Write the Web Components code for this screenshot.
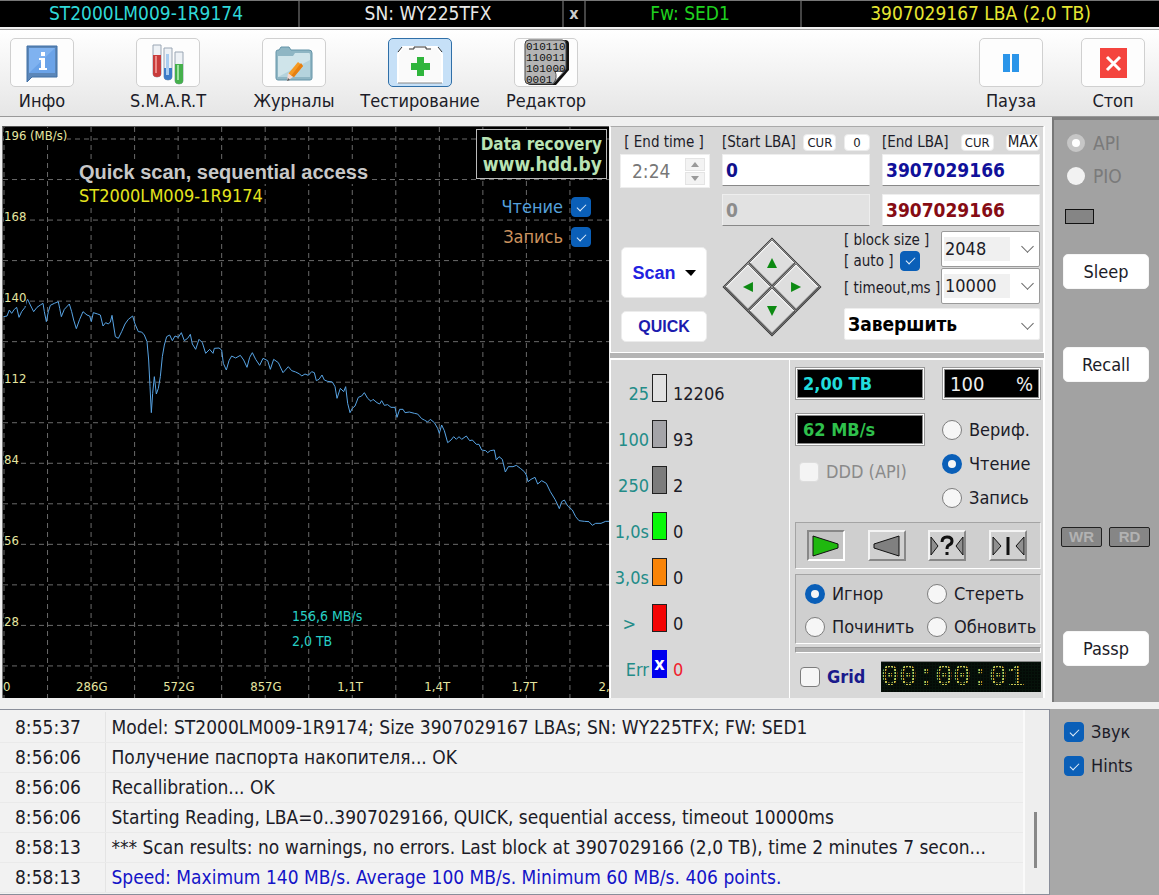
<!DOCTYPE html>
<html lang="ru">
<head>
<meta charset="utf-8">
<title>HDD test console</title>
<style>
  html { height: 100%; }
  body {
    margin: 0; min-height: 100%; background: #f0f0f0; color: #1c1c28;
    font: 18px/22px "DejaVu Sans Condensed", "Noto Sans", sans-serif;
  }
</style>
</head>
<body>
<hdd-app></hdd-app>
<script>
const BASE = `
  *, *::before, *::after { box-sizing: border-box; }
  button, input, select { font: inherit; color: inherit; margin: 0; }
  button { padding: 0; border: 1px solid #ececec; border-radius: 5px; background: #fff; }
  input[type=checkbox], input[type=radio] {
    appearance: none; flex: none; width: 20px; height: 20px; margin: 0;
    border: 1px solid #7d7d7d; background: #f6f6f6; display: grid; place-items: center;
  }
  input[type=checkbox] { border-radius: 4px; }
  input[type=radio] { border-radius: 50%; }
  input[type=checkbox]:checked { background: #0a5fb8; border-color: #0a5fb8; }
  input[type=checkbox]:checked::before {
    content: ""; width: 9px; height: 5px; border: solid #e4f0fb; border-width: 0 0 1px 1px;
    transform: translateY(-1px) rotate(-45deg);
  }
  input[type=radio]:checked { background: #f6f6f6; border: 6px solid #0a5fb8; }
  label { white-space: nowrap; }
`;

function define(name, html, setup) {
  const tpl = document.createElement('template');
  tpl.innerHTML = `<style>${BASE}</style>${html}`;
  customElements.define(name, class extends HTMLElement {
    connectedCallback() {
      if (this.shadowRoot) return;
      this.attachShadow({ mode: 'open' }).append(tpl.content.cloneNode(true));
      if (setup) setup(this, this.shadowRoot);
    }
  });
}

/* ---------- title bar ---------- */
define('title-bar', `
  <style>
    :host { display: grid; grid-template-columns: 300fr 264fr 22px 216fr 357fr; height: 27px;
      background: #000; border-top: 1px solid #777; font-size: 19px; line-height: 25px; text-align: center; }
    span { border-right: 2px solid #444; padding-right: 6px; white-space: nowrap; overflow: hidden; }
    span:last-of-type { border: 0; padding: 0; }
    button { background: none; border: 0; border-right: 2px solid #444; border-radius: 0; color: #ccc; font-weight: bold; font-size: 16px; line-height: 24px; }
  </style>
  <span style="color:#2fd8d8">ST2000LM009-1R9174</span>
  <span style="color:#e8e8e8">SN: WY225TFX</span>
  <button type="button">x</button>
  <span style="color:#1fd01f">Fw: SED1</span>
  <span style="color:#e6e632">3907029167 LBA (2,0 TB)</span>
`);

/* ---------- toolbar ---------- */
define('tool-button', `
  <style>
    :host { display: block; width: 64px; }
    button { width: 100%; background: none; border: 0; display: flex; flex-direction: column; align-items: center; gap: 3px; white-space: nowrap; }
    .box { width: 64px; height: 49px; border: 1px solid #d0d0d0; border-radius: 5px; background: #fdfdfd; display: grid; place-items: center; overflow: hidden; }
    :host([active]) .box { background: #c6e0f7; border-color: #2f6fa8; }
    ::slotted(svg) { display: block; }
  </style>
  <button type="button"><span class="box"><slot name="icon"></slot></span><span><slot></slot></span></button>
`);

define('tool-bar', `
  <style>
    :host { display: flex; justify-content: space-between; height: 88px; padding: 8px 14px 0 10px; margin-top: 2px;
      border-top: 1px solid #a0a0a0; border-bottom: 1px solid #999; background: linear-gradient(#fff, #e6e6e6); }
    div { display: flex; gap: 62px; }
    div + div { gap: 38px; }
  </style>
  <div>
    <tool-button>
      <svg slot="icon" width="36" height="42" viewBox="0 0 36 42"><path d="M3 4H33V35H8L3 40Z" fill="#5b86b8" stroke="#3f6ea4"/><path d="M5 6H31V31H5Z" fill="#7fb2f0"/><path d="M5 31L31 6V31Z" fill="#6ba3e8"/><path d="M17 10h4v4h-4zM15 16h6v10h2v2h-8v-2h2v-8h-2z" fill="#fff"/></svg>
      Инфо
    </tool-button>
    <tool-button>
      <svg slot="icon" width="36" height="44" viewBox="0 0 36 44">
        <g stroke-width="1" fill="#eef2f6" stroke="#9aa6b4">
          <path d="M3 4h8v29q0 3-4 3t-4-3z"/><path d="M14 7h8v29q0 3-4 3t-4-3z"/><path d="M25 11h8v29q0 3-4 3t-4-3z"/></g>
        <path d="M3 14h8v19q0 3-4 3t-4-3z" fill="#c83c3c"/><path d="M5 15h2v17h-2z" fill="#ec8a86"/>
        <path d="M14 27h8v9q0 3-4 3t-4-3z" fill="#3c7cc8"/><path d="M16 13h3v21h-3z" fill="#a9cdf0"/>
        <path d="M25 23h8v17q0 3-4 3t-4-3z" fill="#45b04c"/><path d="M27 24h2v15h-2z" fill="#9ce29e"/>
      </svg>
      S.M.A.R.T
    </tool-button>
    <tool-button>
      <svg slot="icon" width="40" height="42" viewBox="0 0 40 42">
        <path d="M2 10q0-2 2-2h1l2-3h8l2 3h18q3 0 3 3v25q0 2-2 2H4q-2 0-2-2z" fill="#8fb6c4" stroke="#6494a8"/>
        <path d="M4 14h15l2-3h14q1 0 1 2v22H4z" fill="#cfe4ea"/><path d="M4 35L36 18V35Z" fill="#b4d3dd"/>
        <path d="M24 20l5 4-9 11-6-3z" fill="#f59a23"/><path d="M27 21l2 3-9 11-3-1z" fill="#e67f10"/><path d="M14 31l5 4-6 4z" fill="#f3d9d3"/><path d="M13 39l1-3 2 2z" fill="#555"/>
      </svg>
      Журналы
    </tool-button>
    <tool-button active>
      <svg slot="icon" width="48" height="44" viewBox="0 0 48 44">
        <path d="M2 41V13L7 6H41L46 13V41Z" fill="#fafafa" stroke="#fff" stroke-width="2"/>
        <path d="M2 42H46" stroke="#888"/><path d="M2 11l4-5M46 11l-4-5M13 8h5V6h12v2h5" fill="none" stroke="#333" stroke-width="1"/>
        <path d="M21 16h7v6h6v7h-6v6h-7v-6h-6v-7h6z" fill="#2fb53c"/>
      </svg>
      Тестирование
    </tool-button>
    <tool-button>
      <svg slot="icon" width="46" height="47" viewBox="0 0 46 47">
        <path d="M4 5q0-4 4-4h34q4 0 4 4v26L33 46H8q-4 0-4-4z" fill="#111"/>
        <path d="M2 5q0-4 4-4h33q4 0 4 4v25L30 45H6q-4 0-4-4z" fill="#b4b4b4" stroke="#444"/>
        <path d="M30 45q5-6 2-13q6 2 11-2z" fill="#fff" stroke="#555"/>
        <g font-family="Liberation Mono, monospace" font-size="11" fill="#111"><text x="3" y="11">010110</text><text x="3" y="22">110011</text><text x="3" y="33">101000</text><text x="3" y="44">0001</text></g>
      </svg>
      Редактор
    </tool-button>
  </div>
  <div>
    <tool-button><svg slot="icon" width="16" height="18" viewBox="0 0 16 18"><path d="M0 0h7v18H0zM9 0h7v18H9z" fill="#2b95e9"/></svg>Пауза</tool-button>
    <tool-button><svg slot="icon" width="27" height="30" viewBox="0 0 27 30"><path d="M0 0h27v30H0z" fill="#f4443e"/><path d="M7 9l13 13M20 9L7 22" stroke="#fff" stroke-width="3"/></svg>Стоп</tool-button>
  </div>
`);

/* ---------- speed chart ---------- */
const SPEED = `8,590 18,588 25,570 32,580 40,568 47,562 54,592 62,575 72,562 76,545 80,538 88,555 98,575 108,562 118,555 126,550 130,575 136,605 142,575 148,556 160,550 172,545 176,565 181,590 190,568 205,552 212,575 218,600 226,626 236,598 246,575 258,585 266,588 271,605 277,578 290,582 298,585 306,618 314,608 322,612 328,606 333,586 338,618 343,650 352,655 362,635 372,612 382,598 395,588 402,612 412,635 422,636 430,645 438,665 443,720 447,800 451,878 455,820 460,770 466,822 472,805 478,770 484,710 490,675 497,650 506,645 514,662 522,648 532,652 541,638 550,662 560,655 568,643 574,672 584,688 594,658 604,668 614,700 626,688 636,700 640,685 654,684 662,690 667,730 676,750 684,722 692,708 704,714 718,706 728,720 738,742 746,712 754,698 764,718 776,736 786,715 800,722 808,748 818,718 832,728 846,758 862,740 872,752 884,756 896,762 902,768 912,762 922,766 932,755 940,758 946,782 954,778 963,765 970,780 980,784 994,786 1002,800 1008,835 1018,805 1028,815 1034,800 1040,850 1047,878 1054,865 1062,858 1072,832 1082,828 1090,818 1100,835 1110,844 1116,838 1128,848 1136,852 1142,842 1150,856 1160,854 1170,862 1182,862 1188,892 1196,868 1206,868 1212,878 1225,876 1240,880 1250,882 1262,896 1270,900 1280,906 1288,898 1300,908 1310,925 1315,940 1322,915 1330,932 1340,968 1350,960 1358,950 1366,958 1374,950 1382,958 1396,948 1406,962 1414,960 1426,973 1434,973 1442,990 1454,992 1460,998 1468,992 1480,990 1486,1020 1494,1010 1504,1018 1513,1056 1522,1040 1536,1040 1546,1036 1558,1045 1570,1055 1576,1065 1581,1085 1590,1078 1602,1072 1610,1092 1622,1082 1636,1090 1648,1115 1662,1138 1668,1150 1675,1166 1682,1145 1690,1140 1700,1158 1714,1170 1724,1190 1734,1202 1750,1204 1764,1205 1774,1216 1784,1210 1800,1210 1814,1204 1826,1204`;
const PLOT = { x: 6, y: 21, w: 1818, h: 1713, x0: 9, dx: 130.6, y0: 57, dy: 121.6 };

define('speed-chart', `
  <style>
    :host { display: block; position: relative; overflow: hidden; background: #000; border-top: 1px solid #555; border-left: 1px solid #777; font-size: 13px; line-height: 16px; color: #e6e6a0; }
    svg { display: block; width: 100%; height: 100%; position: absolute; inset: 0; }
    svg * { vector-effect: non-scaling-stroke; fill: none; }
    .axis { position: absolute; background: #000; white-space: nowrap; }
    .y { left: 1px; transform: translateY(-11px); }
    .x { bottom: 3px; transform: translateX(-15px); }
    .title, .brand, .legend, .cursor { position: absolute; }
    .title { left: 76px; top: 33px; }
    .title * { display: block; width: max-content; background: #000; margin: 0; white-space: nowrap; }
    h2 { font: bold 20px/24px "Liberation Sans", sans-serif; color: #c8c8c8; }
    p { font-size: 18px; line-height: 24px; color: #e4e41e; }
    .brand { right: 2px; top: 2px; padding: 4px 4px; border: 1px solid #bbb; background: #000; color: #b9e3b4; font-weight: bold; font-size: 17px; line-height: 20px; text-align: right; text-decoration: none; }
    .brand span { display: block; }
    .brand span + span { font-size: 19px; }
    .legend { right: 18px; top: 69px; display: flex; flex-direction: column; gap: 8px; align-items: flex-end; font-size: 18px; line-height: 22px; }
    .legend label { display: flex; align-items: center; gap: 8px; }
    .cursor { left: 48%; top: 477px; margin-left: -2px; color: #27cfc6; font-size: 14px; line-height: 25px; }
    .cursor span { display: block; }
  </style>
  <svg viewBox="${PLOT.x} ${PLOT.y} ${PLOT.w} ${PLOT.h}" preserveAspectRatio="none"><g stroke="#6a6a6a" stroke-dasharray="5 4"></g><polyline stroke="#58a4e4" points="${SPEED}"/></svg>
  <div class="title"><h2>Quick scan, sequential access</h2><p>ST2000LM009-1R9174</p></div>
  <a class="brand" href="#"><span>Data recovery</span><span>www.hdd.by</span></a>
  <div class="legend">
    <label style="color:#55a0dc">Чтение <input type="checkbox" checked></label>
    <label style="color:#cc935e">Запись <input type="checkbox" checked></label>
  </div>
  <div class="cursor"><span>156,6 MB/s</span><span>2,0 TB</span></div>
`, (host, root) => {
  const g = root.querySelector('g');
  let lines = '';
  for (let i = 0; i < 14; i++) {
    const x = PLOT.x0 + PLOT.dx * i, y = PLOT.y0 + PLOT.dy * i;
    lines += `<path d="M${x} ${PLOT.y}V${PLOT.y + PLOT.h}M${PLOT.x} ${y}H${PLOT.x + PLOT.w}"/>`;
  }
  g.innerHTML = lines;
  const label = (cls, text, prop, v) => {
    const s = document.createElement('span');
    s.className = 'axis ' + cls; s.textContent = text; s.style[prop] = v + '%';
    root.querySelector('.title').before(s);
  };
  ['196 (MB/s)', '168', '140', '112', '84', '56', '28'].forEach((t, i) =>
    label('y', t, 'top', (PLOT.y0 + 2 * i * PLOT.dy - PLOT.y) / PLOT.h * 100));
  ['286G', '572G', '857G', '1,1T', '1,4T', '1,7T', '2,'].forEach((t, i) =>
    label('x', t, 'left', (PLOT.x0 + 2 * (i + 1) * PLOT.dx - PLOT.x) / PLOT.w * 100));
  const zero = document.createElement('span');
  zero.className = 'axis'; zero.textContent = '0'; zero.style.cssText = 'left:0;bottom:3px';
  g.parentNode.after(zero);
});

/* ---------- scan range and parameters ---------- */
define('nav-pad', `
  <style>
    :host { display: block; width: 100px; height: 100px; }
    .pad { display: grid; grid-template-columns: 1fr 1fr; width: 70px; height: 70px; margin: 15px; transform: rotate(45deg); border: 1px solid #333; }
    button { border-radius: 0; background: #dedede; border: 2px solid; border-color: #fff #888 #888 #fff; outline: 1px solid #444; outline-offset: -1px; display: grid; place-items: center; }
    svg { transform: rotate(-45deg); }
  </style>
  <div class="pad">
    <button type="button" aria-label="Up"><svg width="12" height="12"><path d="M6 1l5 10H1z" fill="#0c8a12"/></svg></button>
    <button type="button" aria-label="Right"><svg width="12" height="12"><path d="M11 6L1 1v10z" fill="#0c8a12"/></svg></button>
    <button type="button" aria-label="Left"><svg width="12" height="12"><path d="M1 6l10-5v10z" fill="#0c8a12"/></svg></button>
    <button type="button" aria-label="Down"><svg width="12" height="12"><path d="M6 11L1 1h10z" fill="#0c8a12"/></svg></button>
  </div>
`);

define('scan-settings', `
  <style>
    :host { display: block; background: #d8d8d8; border: 1px solid #fff; border-top-color: #aaa; padding: 5px 3px 10px 9px; }
    .range { display: grid; grid-template-columns: 90px 148fr 158fr; column-gap: 12px; }
    .range > div { display: flex; flex-direction: column; gap: 8px; min-width: 0; }
    .head { display: flex; align-items: center; justify-content: space-between; height: 20px; margin-bottom: -6px; font-size: 15px; white-space: nowrap; }
    .head button { height: 17px; padding: 0 3px; font-size: 13px; line-height: 15px; border-radius: 4px; }
    .head .narrow { width: 26px; }
    .head .big { font-size: 15px; padding: 0 1px; }
    input.lba { width: 100%; height: 32px; padding: 0 3px; border: 1px solid #eee; border-bottom: 1px solid #888; background: #fff; font-weight: bold; font-size: 19px; }
    input.lba:disabled { background: #e2e2e2; color: #8c8c8c; }
    .time { display: flex; align-items: center; height: 34px; padding: 0 4px 0 0; border: 1px solid #eee; background: #fff; color: #777; }
    .time input { flex: 1; min-width: 0; border: 0; background: none; padding: 0 0 0 11px; font-size: 19px; color: #777; }
    .spin { display: grid; gap: 1px; width: 20px; }
    .spin button { height: 13px; border: 1px solid #e4e4e4; border-radius: 0; background: #f3f3f3; display: grid; place-items: center; }
    .params { display: flex; margin-top: 5px; }
    .go { display: flex; flex-direction: column; gap: 13px; width: 86px; margin: 16px 15px 0 1px; font-family: "Liberation Sans", sans-serif; font-weight: bold; color: #1c1cae; }
    .go .scan { height: 51px; color: #2222e0; display: flex; align-items: center; justify-content: center; gap: 9px; font-size: 18px; }
    .go .quick { height: 31px; font-size: 16px; }
    nav-pad { margin: 6px 22px 0 0; }
    .opts { flex: 1; display: grid; grid-template-columns: 1fr 99px; grid-template-rows: 36px 36px 35px; align-content: start; row-gap: 1px; min-width: 0; }
    .names { grid-row: span 2; min-width: 0; display: flex; flex-direction: column; font-size: 15px; line-height: 18px; white-space: nowrap; }
    .names label { display: flex; align-items: center; gap: 7px; }
    .names label:nth-child(1) { height: 18px; } .names label:nth-child(2) { height: 24px; } .names label:nth-child(3) { height: 32px; }
    .pick { position: relative; display: grid; }
    .pick::after { content: ""; position: absolute; right: 8px; top: 11px; width: 9px; height: 9px; border: solid #666; border-width: 0 1px 1px 0; transform: rotate(45deg); pointer-events: none; }
    select { appearance: none; width: 100%; min-width: 0; padding: 0 0 0 3px; border: 1px solid #9a9a9a; border-radius: 2px; background: linear-gradient(#f0f0f0, #f0f0f0) 2px 50% / 66px 24px no-repeat #fff; }
    .end { grid-column: 1 / -1; margin-top: 3px; }
    .end select { border-color: #eee; background: #fff; color: #000; font-weight: bold; font-size: 19px; }
  </style>
  <div class="range">
    <div>
      <label class="head" for="time">&nbsp;[ End time ]</label>
      <div class="time"><input id="time" value="2:24" disabled>
        <span class="spin"><button type="button" aria-label="More"><svg width="8" height="5"><path d="M4 0l4 5H0z" fill="#999"/></svg></button><button type="button" aria-label="Less"><svg width="8" height="5"><path d="M4 5l4-5H0z" fill="#999"/></svg></button></span></div>
    </div>
    <div>
      <div class="head"><label for="start">[Start LBA]</label><button type="button">CUR</button><button type="button" class="narrow">0</button></div>
      <input class="lba" id="start" value="0" style="color:#10108c">
      <input class="lba" value="0" aria-label="Current start" disabled>
    </div>
    <div>
      <div class="head"><label for="end">[End LBA]</label><button type="button">CUR</button><button type="button" class="big">MAX</button></div>
      <input class="lba" id="end" value="3907029166" style="color:#10109a">
      <input class="lba" value="3907029166" aria-label="Current end" style="color:#860c14">
    </div>
  </div>
  <div class="params">
    <div class="go">
      <button type="button" class="scan">Scan <svg width="11" height="6"><path d="M0 0h11L6 6z" fill="#000"/></svg></button>
      <button type="button" class="quick">QUICK</button>
    </div>
    <nav-pad></nav-pad>
    <div class="opts">
      <div class="names">
        <label for="block">[ block size ]</label>
        <label>[ auto ] <input type="checkbox" checked></label>
        <label for="timeout">[ timeout,ms ]</label>
      </div>
      <span class="pick"><select id="block"><option>2048</option></select></span>
      <span class="pick"><select id="timeout"><option>10000</option></select></span>
      <span class="pick end"><select aria-label="After scan"><option>Завершить</option></select></span>
    </div>
  </div>
`);

/* ---------- block timing counters ---------- */
define('block-counters', `
  <style>
    :host { display: block; width: 180px; background: #d8d8d8; border: solid #fff; border-width: 1px 1px 0 1px; padding: 13px 0 0 2px; }
    table { border-collapse: collapse; }
    tr { height: 46px; }
    th, td { padding: 0; vertical-align: top; font-weight: normal; line-height: 22px; }
    th { width: 36px; text-align: right; color: #238c88; padding-top: 10px; }
    td { padding-top: 10px; }
    td:nth-child(2) { padding: 1px 6px 0 3px; }
    i { display: block; width: 15px; height: 28px; border: 1px solid #222; outline: 1px solid #22222255; outline-offset: -1px; }
    .err { background: #0000ee; border: 0; outline: 0; color: #fff; font: bold 18px/28px "DejaVu Sans Condensed", sans-serif; text-align: center; }
  </style>
  <table><tbody></tbody></table>
`, (host, root) => {
  const rows = [['25', '#e2e2e2', '12206'], ['100', '#a4a4a8', '93'], ['250', '#7c7c7c', '2'], ['1,0s', '#08f808', '0'], ['3,0s', '#f88408', '0'], ['>', '#f40404', '0'], ['Err', '', '0']];
  root.querySelector('tbody').innerHTML = rows.map(([n, c, v]) =>
    `<tr><th scope="row"${n === '>' ? ' style="padding-right:13px"' : ''}>${n}</th><td><i ${c ? `style="background:${c}"` : 'class="err"'}>${c ? '' : 'x'}</i></td><td${c ? '' : ' style="color:#f0202c"'}>${v}</td></tr>`).join('');
});

/* ---------- scan control ---------- */
define('led-display', `
  <style>
    :host { display: flex; justify-content: space-between; align-items: center; height: 33px; padding: 0 7px; background: #000; border: 1px solid #999; box-shadow: inset 0 0 0 1px #fff, inset 0 0 0 2px #888; white-space: nowrap; }
  </style><slot></slot>
`);

define('dot-clock', `
  <style>
    :host { display: block; position: relative; width: 160px; height: 31px; background: #040a06; border-top: 1px solid #888; color: #c4c452;
      font: 30px/30px "Liberation Mono", monospace; }
    :host::after { content: ""; position: absolute; inset: 0;
      background: repeating-linear-gradient(90deg, #06120a 0 1px, transparent 1px 3px), repeating-linear-gradient(#06120a 0 1px, transparent 1px 3px); }
  </style><slot></slot>
`);

define('scan-control', `
  <style>
    :host { display: block; background: #d8d8d8; border: solid #fff; border-width: 1px 1px 0 0; padding: 7px 2px 0 5px; }
    .top { display: grid; grid-template-columns: 130fr 99fr; column-gap: 17px; }
    .col { display: flex; flex-direction: column; gap: 13px; }
    .radios { display: flex; flex-direction: column; gap: 12px; padding-top: 6px; }
    .opt { display: flex; align-items: center; gap: 7px; height: 22px; }
    .ddd { color: #8a8a8a; padding: 0 0 0 4px; height: 26px; }
    .ddd input { border-color: #ddd; background: #f4f4f4; }
    .box { border: 1px solid; border-color: #a4a4a4 #eee #fff #a4a4a4; background: #cfcfcf; }
    .moves { display: flex; justify-content: space-between; padding: 7px 13px 7px 11px; margin-top: 13px; }
    .moves button { width: 38px; height: 31px; border-radius: 0; border: 2px solid; border-color: #f4f4f4 #888 #888 #f4f4f4; background: #d0d0d0; display: grid; place-items: center; }
    .moves button:first-child { border-color: #888 #fff #fff #888; background: #c4c4c4; }
    .modes { display: grid; grid-template-columns: 122px 1fr; row-gap: 11px; padding: 8px 0 5px 9px; margin-top: 5px; }
    .bar { height: 6px; margin-top: 3px; background: #b0b0b0; border: 1px solid; border-color: #999 #fff #fff #999; }
    .foot { display: flex; justify-content: space-between; align-items: center; padding: 8px 0 6px 5px; }
    .foot b { color: #1a1a8c; }
  </style>
  <div class="top">
    <div class="col">
      <led-display><b style="color:#22dcdc">2,00 TB</b></led-display>
      <led-display><b style="color:#2fc04c">62 MB/s</b></led-display>
      <label class="opt ddd"><input type="checkbox" disabled> DDD (API)</label>
    </div>
    <div class="col">
      <led-display style="color:#eee;font-size:20px"><span>100</span><span>%</span></led-display>
      <div class="radios">
        <label class="opt"><input type="radio" name="op"> Вериф.</label>
        <label class="opt"><input type="radio" name="op" checked> Чтение</label>
        <label class="opt"><input type="radio" name="op"> Запись</label>
      </div>
    </div>
  </div>
  <div class="box moves">
    <button type="button" aria-label="Forward"><svg width="30" height="22"><path d="M2 1L27 9v4L2 21z" fill="#1fb80f" stroke="#111"/></svg></button>
    <button type="button" aria-label="Backward"><svg width="30" height="22"><path d="M27 1L2 9v4l25 8z" fill="#808080" stroke="#111"/></svg></button>
    <button type="button" aria-label="Random"><svg width="34" height="24" fill="#909090" stroke="#111"><path d="M1 3l7 9-7 9zM33 3l-7 9 7 9z"/><path d="M12 8q0-5 5-5t5 4q0 3-3 4-2 1-2 4M17 18v3" fill="none" stroke-width="3"/></svg></button>
    <button type="button" aria-label="Butterfly"><svg width="34" height="24" fill="#909090" stroke="#111"><path d="M2 3l8 9-8 9zM33 3l-8 9 8 9z"/><path d="M17 3v18" stroke-width="3"/></svg></button>
  </div>
  <div class="box modes">
    <label class="opt"><input type="radio" name="mode" checked> Игнор</label>
    <label class="opt"><input type="radio" name="mode"> Стереть</label>
    <label class="opt"><input type="radio" name="mode"> Починить</label>
    <label class="opt"><input type="radio" name="mode"> Обновить</label>
  </div>
  <div class="bar"></div>
  <div class="foot"><label class="opt"><input type="checkbox"> <b>Grid</b></label><dot-clock>00:00:01</dot-clock></div>
`);

/* ---------- side columns ---------- */
define('drive-side', `
  <style>
    :host { display: flex; flex-direction: column; width: 107px; background: #a2a2a2; border-top: 3px solid #808080; border-left: 2px solid #777; padding: 12px 9px 36px; }
    .opt { display: flex; align-items: center; gap: 8px; height: 22px; color: #7a7a7a; font-size: 19px; padding-left: 4px; }
    .opt + .opt { margin-top: 11px; }
    .opt input[type=radio] { width: 18px; height: 18px; border: 0; background: #f2f2f2; }
    .opt input[type=radio]:checked { border: 5px solid #c6c6c6; background: #fff; }
    .led { width: 29px; height: 15px; margin: 22px 0 30px 2px; background: #858585; border: 1px solid #111; }
    button { width: 86px; height: 35px; border-color: #f6f6f6; }
    .wide { margin-top: 58px; }
    .lamps { display: flex; gap: 7px; margin: auto 0 84px -2px; }
    .lamps span { width: 41px; height: 20px; border: 1px solid #222; border-radius: 2px; background: #868686; color: #b2b2b2; font: bold 15px/18px "Liberation Sans", sans-serif; text-align: center; }
  </style>
  <label class="opt"><input type="radio" name="bus" checked disabled>API</label>
  <label class="opt"><input type="radio" name="bus" disabled>PIO</label>
  <div class="led"></div>
  <button type="button">Sleep</button>
  <button type="button" class="wide">Recall</button>
  <div class="lamps"><span>WR</span><span>RD</span></div>
  <button type="button">Passp</button>
`);

define('event-log', `
  <style>
    :host { display: flex; background: #f2f2f2; border: 1px solid #8a8e9a; border-left: 0; min-width: 0; font-size: 19px; }
    table { flex: 1; border-collapse: collapse; table-layout: fixed; margin-top: 2px; height: max-content; min-width: 0; width: 100%; }
    td { height: 30px; padding: 0; border-bottom: 1px solid #eaeaea; white-space: nowrap; overflow: hidden; text-overflow: ellipsis; }
    td:first-child { width: 105px; padding-left: 15px; border-right: 1px solid #e4e4e4; }
    td + td { padding-left: 6px; padding-right: 18px; }
    tr:last-child td + td { color: #1414c8; }
    .track { flex: none; width: 26px; background: #eee; border-left: 2px solid #fafafa; padding: 102px 0 0 9px; }
    .track i { display: block; width: 3px; height: 56px; background: #888; }
  </style>
  <table><tbody></tbody></table><div class="track"><i></i></div>
`, (host, root) => {
  const rows = [
    ['8:55:37', 'Model: ST2000LM009-1R9174; Size 3907029167 LBAs; SN: WY225TFX; FW: SED1'],
    ['8:56:06', 'Получение паспорта накопителя... OK'],
    ['8:56:06', 'Recallibration... OK'],
    ['8:56:06', 'Starting Reading, LBA=0..3907029166, QUICK, sequential access, timeout 10000ms'],
    ['8:58:13', '*** Scan results: no warnings, no errors. Last block at 3907029166 (2,0 TB), time 2 minutes 7 secon...'],
    ['8:58:13', 'Speed: Maximum 140 MB/s. Average 100 MB/s. Minimum 60 MB/s. 406 points.']];
  root.querySelector('tbody').innerHTML = rows.map(r => `<tr><td>${r[0]}</td><td>${r[1]}</td></tr>`).join('');
});

define('view-options', `
  <style>
    :host { display: flex; flex-direction: column; gap: 12px; width: 109px; background: #a8a8a8; padding: 12px 0 0 14px; }
    label { display: flex; align-items: center; gap: 7px; }
  </style>
  <label><input type="checkbox" checked>Звук</label>
  <label><input type="checkbox" checked>Hints</label>
`);

/* ---------- page frame ---------- */
define('hdd-app', `
  <style>
    :host { display: flex; flex-direction: column; min-height: 100vh; }
    main { display: grid; grid-template-columns: 1fr 442px 107px; }
    speed-chart { margin: 9px 1px 4px 2px; }
    .panel { display: grid; grid-template-columns: 180px 1fr; align-content: start; margin: 9px 7px 4px 0; background: #d8d8d8; border-right: 1px solid #fff; }
    scan-settings { grid-column: 1 / -1; }
    .sep { grid-column: 1 / -1; height: 6px; background: #b4b4b4; border-bottom: 1px solid #fff; }
    footer { display: grid; grid-template-columns: 1fr 109px; flex: 1; min-height: 186px; margin-top: 7px; }
  </style>
  <title-bar></title-bar>
  <tool-bar></tool-bar>
  <main>
    <speed-chart></speed-chart>
    <div class="panel">
      <scan-settings></scan-settings>
      <div class="sep"></div>
      <block-counters></block-counters>
      <scan-control></scan-control>
    </div>
    <drive-side></drive-side>
  </main>
  <footer><event-log></event-log><view-options></view-options></footer>
`);
</script>
</body>
</html>
